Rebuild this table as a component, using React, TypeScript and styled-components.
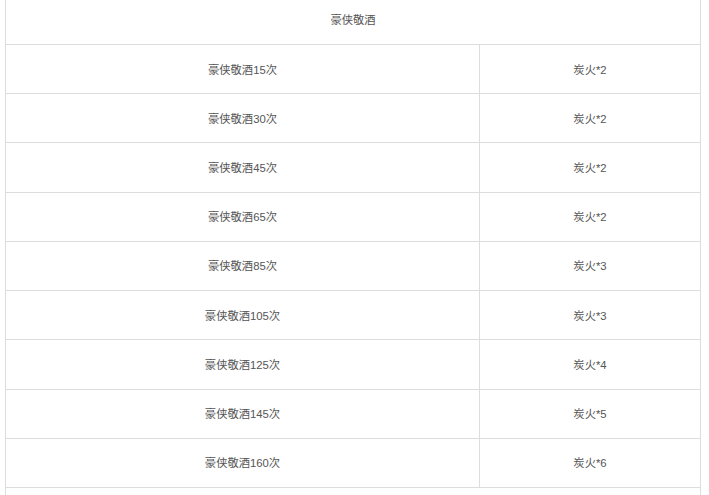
import React from "react";
import styled, { createGlobalStyle } from "styled-components";

const GlobalStyle = createGlobalStyle`
  html, body {
    margin: 0;
    padding: 0;
    background: #ffffff;
    overflow: hidden;
  }
`;

const Page = styled.div`
  padding-left: 5px;
  margin-top: -5.22px;
  font-family: "Liberation Sans", "Noto Sans CJK SC", sans-serif;
  font-size: 11.3px;
  color: #555555;
`;

const Table = styled.div`
  width: 696px;
  box-sizing: border-box;
  border-left: 1px solid #dddddd;
  border-right: 1px solid #dddddd;
`;

const Row = styled.div<{ $split?: boolean; $first?: boolean }>`
  display: grid;
  grid-template-columns: ${(p) => (p.$split ? "474px 1fr" : "1fr")};
  height: 49.22px;
  box-sizing: border-box;
  border-top: ${(p) => (p.$first ? "none" : "1px solid #dddddd")};
`;

const Cell = styled.div<{ $divider?: boolean }>`
  display: flex;
  align-items: center;
  justify-content: center;
  box-sizing: border-box;
  padding-bottom: 1px;
  border-right: ${(p) => (p.$divider ? "1px solid #dddddd" : "none")};
  white-space: nowrap;
`;

const rows: [string, string][] = [
  ["豪侠敬酒15次", "炭火*2"],
  ["豪侠敬酒30次", "炭火*2"],
  ["豪侠敬酒45次", "炭火*2"],
  ["豪侠敬酒65次", "炭火*2"],
  ["豪侠敬酒85次", "炭火*3"],
  ["豪侠敬酒105次", "炭火*3"],
  ["豪侠敬酒125次", "炭火*4"],
  ["豪侠敬酒145次", "炭火*5"],
  ["豪侠敬酒160次", "炭火*6"],
];

export default function App() {
  return (
    <Page>
      <GlobalStyle />
      <Table>
        <Row $first>
          <Cell>豪侠敬酒</Cell>
        </Row>
        {rows.map(([a, b]) => (
          <Row $split key={a}>
            <Cell $divider>{a}</Cell>
            <Cell>{b}</Cell>
          </Row>
        ))}
        <Row>
          <Cell />
        </Row>
      </Table>
    </Page>
  );
}
